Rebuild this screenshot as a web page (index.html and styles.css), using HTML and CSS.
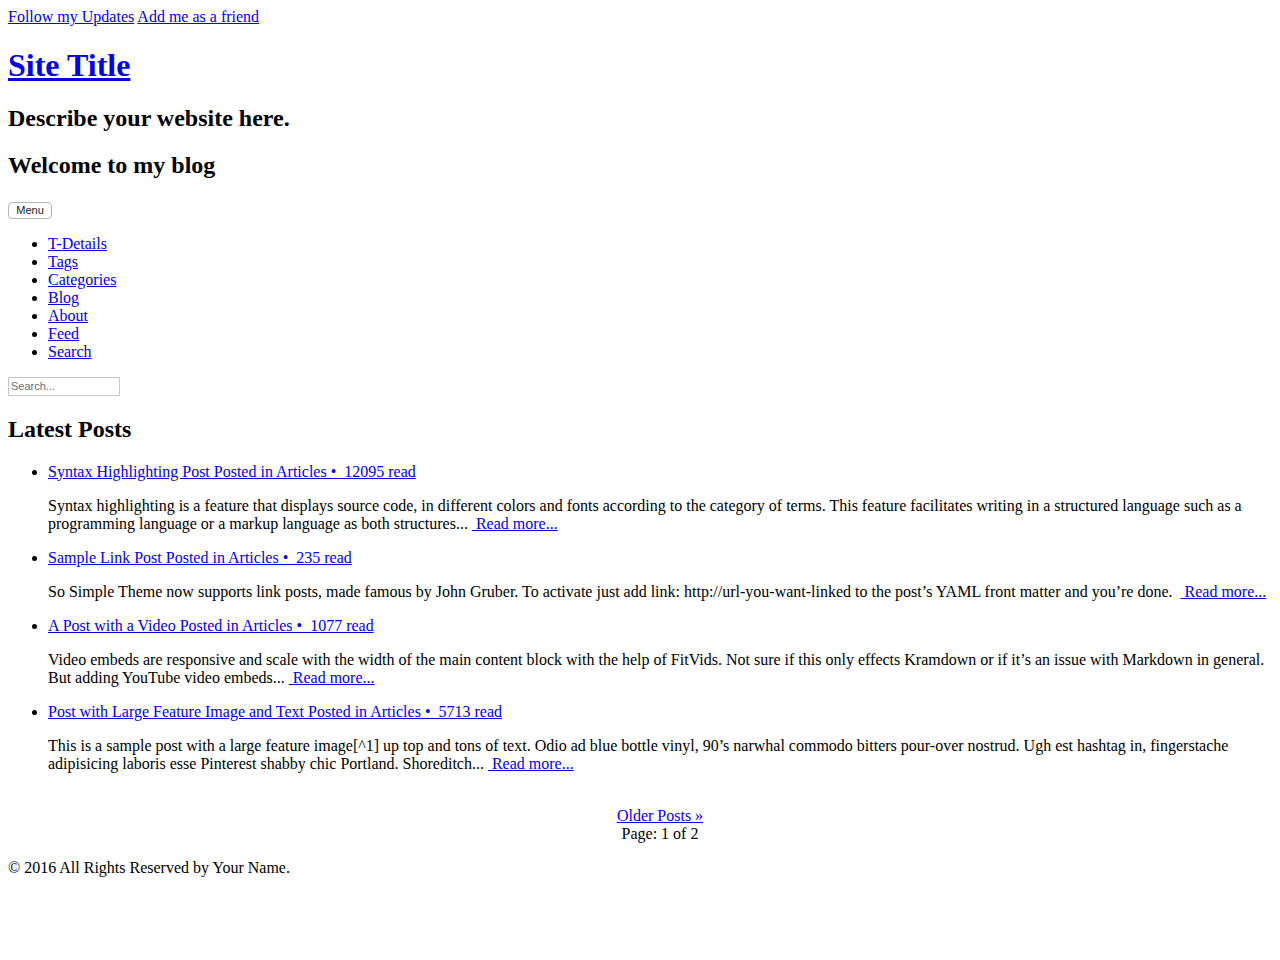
FILE: index.html
```html
<!DOCTYPE html>
<html lang="en">
<head>
<meta charset="utf-8">
<title>Site Title</title>
<link rel="stylesheet" href="styles.css">
</head>
<body class="page">
<div class="social"><a href="#">Follow my Updates</a> <a href="#">Add me as a friend</a></div>
<h1 class="site-title"><a href="#">Site Title</a></h1>
<h2 class="heading">Describe your website here.</h2>
<h2 class="heading">Welcome to my blog</h2>
<nav class="nav">
  <button class="menu-btn" type="button">Menu</button>
  <ul class="nav-list">
    <li><a href="#">T-Details</a></li>
    <li><a href="#">Tags</a></li>
    <li><a href="#">Categories</a></li>
    <li><a href="#">Blog</a></li>
    <li><a href="#">About</a></li>
    <li><a href="#">Feed</a></li>
    <li><a href="#">Search</a></li>
  </ul>
</nav>
<form class="search-form"><input class="search-input" type="text" placeholder="Search..."></form>
<h2 class="heading">Latest Posts</h2>
<ul class="posts">
  <li>
    <a href="#">Syntax Highlighting Post Posted in Articles •&nbsp; 12095 read</a>
    <p class="excerpt">Syntax highlighting is a feature that displays source code, in different colors and fonts according to the category of terms. This feature facilitates writing in a structured language such as a programming language or a markup language as both structures... <a href="#">&nbsp;Read more...</a></p>
  </li>
  <li>
    <a href="#">Sample Link Post Posted in Articles •&nbsp; 235 read</a>
    <p class="excerpt">So Simple Theme now supports link posts, made famous by John Gruber. To activate just add link: http://url-you-want-linked to the post’s YAML front matter and you’re done. &nbsp;<a href="#">&nbsp;Read more...</a></p>
  </li>
  <li>
    <a href="#">A Post with a Video Posted in Articles •&nbsp; 1077 read</a>
    <p class="excerpt">Video embeds are responsive and scale with the width of the main content block with the help of FitVids. Not sure if this only effects Kramdown or if it’s an issue with Markdown in general. But adding YouTube video embeds... <a href="#">&nbsp;Read more...</a></p>
  </li>
  <li>
    <a href="#">Post with Large Feature Image and Text Posted in Articles •&nbsp; 5713 read</a>
    <p class="excerpt">This is a sample post with a large feature image[^1] up top and tons of text. Odio ad blue bottle vinyl, 90’s narwhal commodo bitters pour-over nostrud. Ugh est hashtag in, fingerstache adipisicing laboris esse Pinterest shabby chic Portland. Shoreditch... <a href="#">&nbsp;Read more...</a></p>
  </li>
</ul>
<div class="pagination">
  <a href="#">Older Posts »</a><br>
  Page: 1 of 2
</div>
<p class="footer">© 2016 All Rights Reserved by Your Name.</p>
</body>
</html>
```
FILE: styles.css
```css
html {
  background: #fff;
}
.page {
  margin: 8px;
  font-family: "Liberation Serif", "Times New Roman", serif;
  font-size: 16px;
  line-height: 1.125;
  color: #000;
}
.page a {
  color: #0000ee;
}
.site-title {
  font-size: 32px;
  margin: 21.44px 0;
}
.heading {
  font-size: 24px;
  margin: 19.92px 0;
}
.nav {
  display: block;
  padding-top: 3px;
}
.menu-btn {
  display: block;
  margin: 0;
  height: 17px;
  width: 44px;
  padding: 0;
  font-family: "Liberation Sans", Arial, sans-serif;
  font-size: 11px;
  line-height: 15px;
  color: #222;
  background: #fff;
  border: 1px solid #b5b5b5;
  border-radius: 4px;
}
.nav-list {
  margin: 16px 0;
  padding-left: 40px;
}
.search-form {
  margin: 16px 0 0;
}
.search-input {
  display: block;
  box-sizing: border-box;
  width: 112px;
  height: 19px;
  margin: 0;
  padding: 1px 2px;
  font-family: "Liberation Sans", Arial, sans-serif;
  font-size: 11px;
  border: 1px solid #c8c8c8;
  border-radius: 0;
}
.search-input::placeholder {
  color: #6b6b6b;
}
.posts {
  margin: 16px 0;
  padding-left: 40px;
}
.excerpt {
  margin: 16px 0;
}
.pagination {
  margin-top: 34px;
  padding-left: 40px;
  text-align: center;
}
.footer {
  margin: 16px 0;
}
```
